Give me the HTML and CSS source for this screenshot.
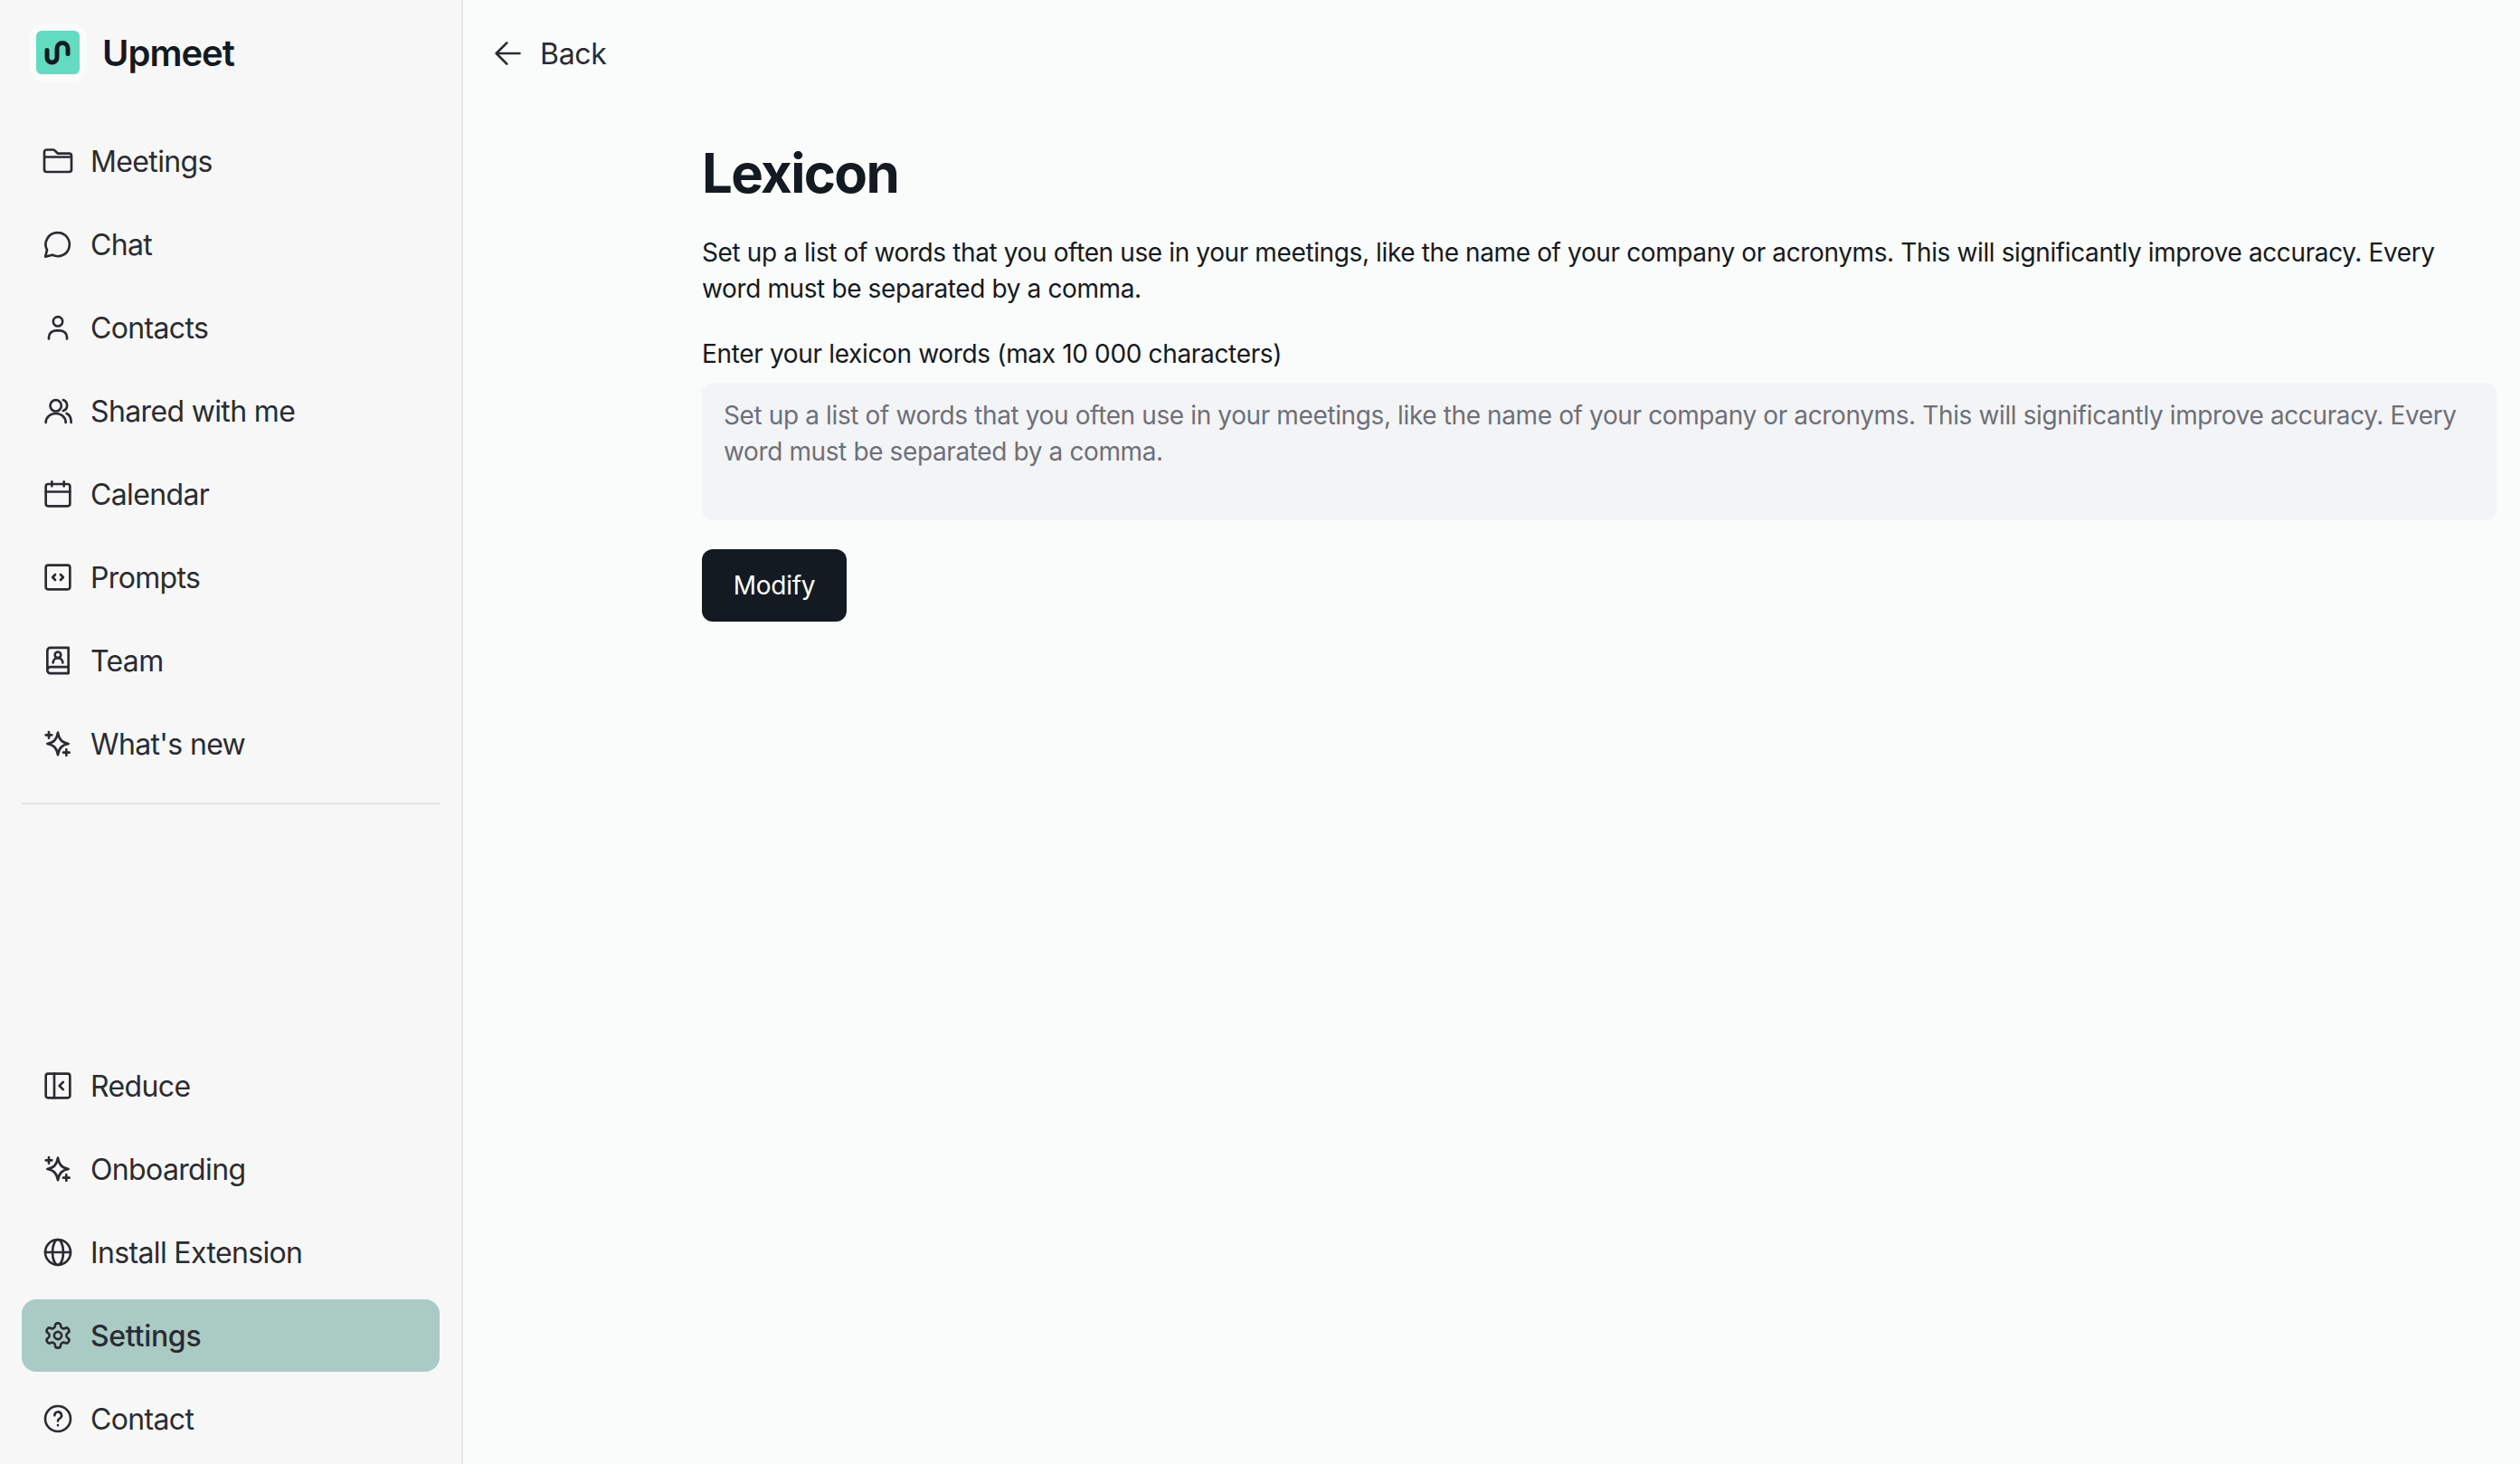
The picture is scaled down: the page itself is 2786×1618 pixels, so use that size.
FILE: index.html
```html
<!DOCTYPE html>
<html lang="en">
<head>
    <meta charset="UTF-8">
    <meta name="viewport" content="width=device-width, initial-scale=1.0">
    <title>Lexicon - Upmeet</title>
    <link rel="stylesheet" href="styles.css">
</head>
<body>

<aside class="sidebar">
    <div class="brand">
        <span class="brand-logo">
            <svg viewBox="0 0 48 48" width="48" height="48"><path d="M12 21.5v8a5.5 5.5 0 0 0 11 0v-10a6 6 0 0 1 12 0v6" fill="none" stroke="#141a21" stroke-width="5" stroke-linecap="round"/></svg>
        </span>
        <span class="brand-name">Upmeet</span>
    </div>

    <nav class="nav nav-top">
        <a class="nav-item" href="#">
            <svg class="nav-icon" viewBox="0 0 24 24"><path d="M3 9V6a1.5 1.5 0 0 1 1.5-1.5h4.3c.4 0 .8.2 1.1.5L12 7h7.5A1.5 1.5 0 0 1 21 8.500v9.200a1.500 1.500 0 0 1-1.500 1.500h-15A1.500 1.500 0 0 1 3 17.700zM3 9.300h18"/></svg>
            Meetings
        </a>
        <a class="nav-item" href="#">
            <svg class="nav-icon" viewBox="0 0 24 24"><path d="M12 4.300a7.800 7.800 0 1 1-3.700 14.700l-4.600 1.200 1.100-4.500A7.800 7.800 0 0 1 12 4.300z"/></svg>
            Chat
        </a>
        <a class="nav-item" href="#">
            <svg class="nav-icon" viewBox="0 0 24 24"><circle cx="12" cy="8" r="3.100"/><path d="M6 19.500v-1a4.500 4.500 0 0 1 4.500-4.500h3a4.500 4.500 0 0 1 4.500 4.500v1"/></svg>
            Contacts
        </a>
        <a class="nav-item" href="#">
            <svg class="nav-icon" viewBox="0 0 24 24"><circle cx="10.600" cy="8.600" r="3.700"/><path d="M4 19.800c0-3.500 3-6 6.600-6s6.600 2.500 6.600 6M15.500 4.800a3.800 3.800 0 0 1 0 7.200M17.800 13.800c1.900.8 3 3 3 6"/></svg>
            Shared with me
        </a>
        <a class="nav-item" href="#">
            <svg class="nav-icon" viewBox="0 0 24 24"><rect x="4" y="5.400" width="16" height="14.600" rx="1.500"/><path d="M4 10.500h16M8 3.800v3M16 3.800v3"/></svg>
            Calendar
        </a>
        <a class="nav-item" href="#">
            <svg class="nav-icon" viewBox="0 0 24 24"><rect x="4" y="4" width="16" height="16" rx="1.500"/><path d="M10.200 10.200 8.500 12l1.700 1.800M13.800 10.200l1.700 1.800-1.700 1.800"/></svg>
            Prompts
        </a>
        <a class="nav-item" href="#">
            <svg class="nav-icon" viewBox="0 0 24 24"><path d="M19 3.500H7a2 2 0 0 0-2 2v13a2 2 0 0 0 2 2h12zM5 18.300a2 2 0 0 1 2-2h12"/><circle cx="12" cy="8.300" r="2"/><path d="M8.800 13.500a3.200 3.200 0 0 1 6.400 0"/></svg>
            Team
        </a>
        <a class="nav-item" href="#">
            <svg class="nav-icon" viewBox="0 0 24 24"><path d="M12 4.600c.8 4.600 2.700 6.600 7 7.400-4.300.8-6.200 2.800-7 7.400-.8-4.600-2.700-6.600-7-7.400 4.300-.8 6.200-2.800 7-7.400zM6 4.200v4M4 6.200h4M17.600 15.800v4M15.600 17.800h4"/></svg>
            What's new
        </a>
    </nav>

    <hr class="nav-divider">

    <nav class="nav nav-bottom">
        <a class="nav-item" href="#">
            <svg class="nav-icon" viewBox="0 0 24 24"><rect x="4" y="4" width="16" height="16" rx="1.500"/><path d="M9.600 4v16M15.500 9.500 13 12l2.500 2.500"/></svg>
            Reduce
        </a>
        <a class="nav-item" href="#">
            <svg class="nav-icon" viewBox="0 0 24 24"><path d="M12 4.600c.8 4.600 2.700 6.600 7 7.400-4.300.8-6.200 2.800-7 7.400-.8-4.600-2.700-6.600-7-7.400 4.300-.8 6.200-2.800 7-7.400zM6 4.200v4M4 6.200h4M17.600 15.800v4M15.600 17.800h4"/></svg>
            Onboarding
        </a>
        <a class="nav-item" href="#">
            <svg class="nav-icon" viewBox="0 0 24 24"><circle cx="12" cy="12" r="8.400"/><ellipse cx="12" cy="12" rx="3.600" ry="8.400"/><path d="M3.600 12h16.800"/></svg>
            Install Extension
        </a>
        <a class="nav-item nav-item-active" href="#">
            <svg class="nav-icon" viewBox="0 0 24 24"><g transform="translate(12 12) scale(.82) translate(-12 -12)" stroke-width="1.950"><path d="M12.220 2h-.44a2 2 0 0 0-2 2v.18a2 2 0 0 1-1 1.730l-.43.250a2 2 0 0 1-2 0l-.15-.08a2 2 0 0 0-2.730.730l-.22.380a2 2 0 0 0 .730 2.730l.15.100a2 2 0 0 1 1 1.720v.510a2 2 0 0 1-1 1.740l-.15.090a2 2 0 0 0-.730 2.730l.22.380a2 2 0 0 0 2.730.730l.15-.08a2 2 0 0 1 2 0l.43.250a2 2 0 0 1 1 1.730V20a2 2 0 0 0 2 2h.44a2 2 0 0 0 2-2v-.18a2 2 0 0 1 1-1.730l.43-.25a2 2 0 0 1 2 0l.15.08a2 2 0 0 0 2.730-.73l.22-.39a2 2 0 0 0-.73-2.730l-.15-.08a2 2 0 0 1-1-1.740v-.5a2 2 0 0 1 1-1.740l.15-.09a2 2 0 0 0 .73-2.730l-.22-.38a2 2 0 0 0-2.730-.73l-.15.08a2 2 0 0 1-2 0l-.43-.25a2 2 0 0 1-1-1.730V4a2 2 0 0 0-2-2z"/><circle cx="12" cy="12" r="3"/></g></svg>
            Settings
        </a>
        <a class="nav-item" href="#">
            <svg class="nav-icon" viewBox="0 0 24 24"><circle cx="12" cy="12" r="8.400"/><path d="M9.800 9.800a2.300 2.300 0 1 1 3.400 2c-.8.4-1.200.9-1.200 1.700M12 16.300v.1"/></svg>
            Contact
        </a>
    </nav>
</aside>

<main class="main">
    <a class="back-link" href="#">
        <svg class="nav-icon" viewBox="0 0 24 24"><path d="M19.500 12h-15M11 5l-7 7 7 7"/></svg>
        <span class="back-text">Back</span>
    </a>

    <section class="content">
        <h1>Lexicon</h1>
        <p class="intro">Set up a list of words that you often use in your meetings, like the name of your company or acronyms. This will significantly improve accuracy. Every word must be separated by a comma.</p>
        <label class="field-label" for="lexicon">Enter your lexicon words (max 10 000 characters)</label>
        <textarea class="field-input" id="lexicon" rows="3" placeholder="Set up a list of words that you often use in your meetings, like the name of your company or acronyms. This will significantly improve accuracy. Every word must be separated by a comma."></textarea>
        <button class="btn-primary" type="button">Modify</button>
    </section>
</main>

</body>
</html>
```

FILE: styles.css
```css
* {
    box-sizing: border-box;
}
body {
    font-family: Inter, "Noto Sans", sans-serif;
    margin: 0;
    height: 100vh;
    display: flex;
    background-color: #fafbfb;
    color: #141a21;
    overflow: hidden;
}
.sidebar {
    width: 512px;
    flex-shrink: 0;
    display: flex;
    flex-direction: column;
    padding: 26px 24px 10px;
    background-color: #f7f7f7;
    border-right: 2px solid #e2e3e4;
}
.brand {
    display: flex;
    align-items: center;
    gap: 17px;
    height: 64px;
    margin-left: 8px;
    margin-bottom: 48px;
}
.brand-logo {
    width: 64px;
    height: 64px;
    padding: 8px;
    background-color: #fafbfb;
    border-radius: 16px;
}
.brand-logo svg {
    display: block;
    background-color: #62dbc0;
    border-radius: 6px;
}
.brand-name {
    font-size: 40px;
    font-weight: 600;
    line-height: 64px;
    letter-spacing: -1px;
    padding-top: 2px;
}
.nav {
    display: flex;
    flex-direction: column;
    gap: 12px;
}
.nav-bottom {
    margin-top: auto;
}
.nav-item {
    display: flex;
    align-items: center;
    gap: 16px;
    height: 80px;
    padding: 0 20px;
    border-radius: 16px;
    font-size: 32px;
    letter-spacing: -0.64px;
    color: #2a2c31;
    text-decoration: none;
}
.nav-item-active {
    background-color: #aacac4;
    font-weight: 500;
    letter-spacing: -0.3px;
}
.nav-icon {
    width: 40px;
    height: 40px;
    flex-shrink: 0;
    fill: none;
    stroke: currentColor;
    stroke-width: 1.6;
    stroke-linecap: round;
    stroke-linejoin: round;
}
.nav-divider {
    width: 100%;
    height: 2px;
    margin: 25px 0 0;
    border: none;
    background-color: #e2e3e4;
}
.main {
    flex: 1;
    padding: 38px 26px 0 30px;
}
.back-link {
    display: inline-flex;
    align-items: center;
    gap: 15px;
    font-size: 32px;
    font-weight: 400;
    line-height: 40px;
    letter-spacing: -0.3px;
    color: #2a2c31;
    text-decoration: none;
}
.back-text {
    padding-top: 2px;
}
.content {
    display: flex;
    flex-direction: column;
    align-items: flex-start;
    margin-left: 234px;
    margin-top: 68px;
}
h1 {
    font-size: 60px;
    font-weight: 700;
    line-height: 80px;
    letter-spacing: -1.7px;
    margin: 0 0 28px;
}
.intro {
    font-size: 28px;
    line-height: 40px;
    letter-spacing: -0.38px;
    margin: 0 0 32px;
}
.field-label {
    font-size: 28px;
    font-weight: 400;
    line-height: 40px;
    letter-spacing: -0.34px;
    margin-bottom: 12px;
}
.field-input {
    display: block;
    width: 100%;
    padding: 16px 24px;
    border: none;
    border-radius: 12px;
    background-color: #f3f4f6;
    font-family: inherit;
    font-size: 28px;
    line-height: 40px;
    letter-spacing: -0.38px;
    color: #141a21;
    resize: none;
    outline: none;
}
.field-input::placeholder {
    color: #6d7079;
    opacity: 1;
}
.btn-primary {
    width: 160px;
    height: 80px;
    margin-top: 32px;
    border: none;
    border-radius: 12px;
    background-color: #141a21;
    color: white;
    font-family: inherit;
    font-size: 28px;
    font-weight: 400;
    letter-spacing: -0.3px;
    cursor: pointer;
}
```
